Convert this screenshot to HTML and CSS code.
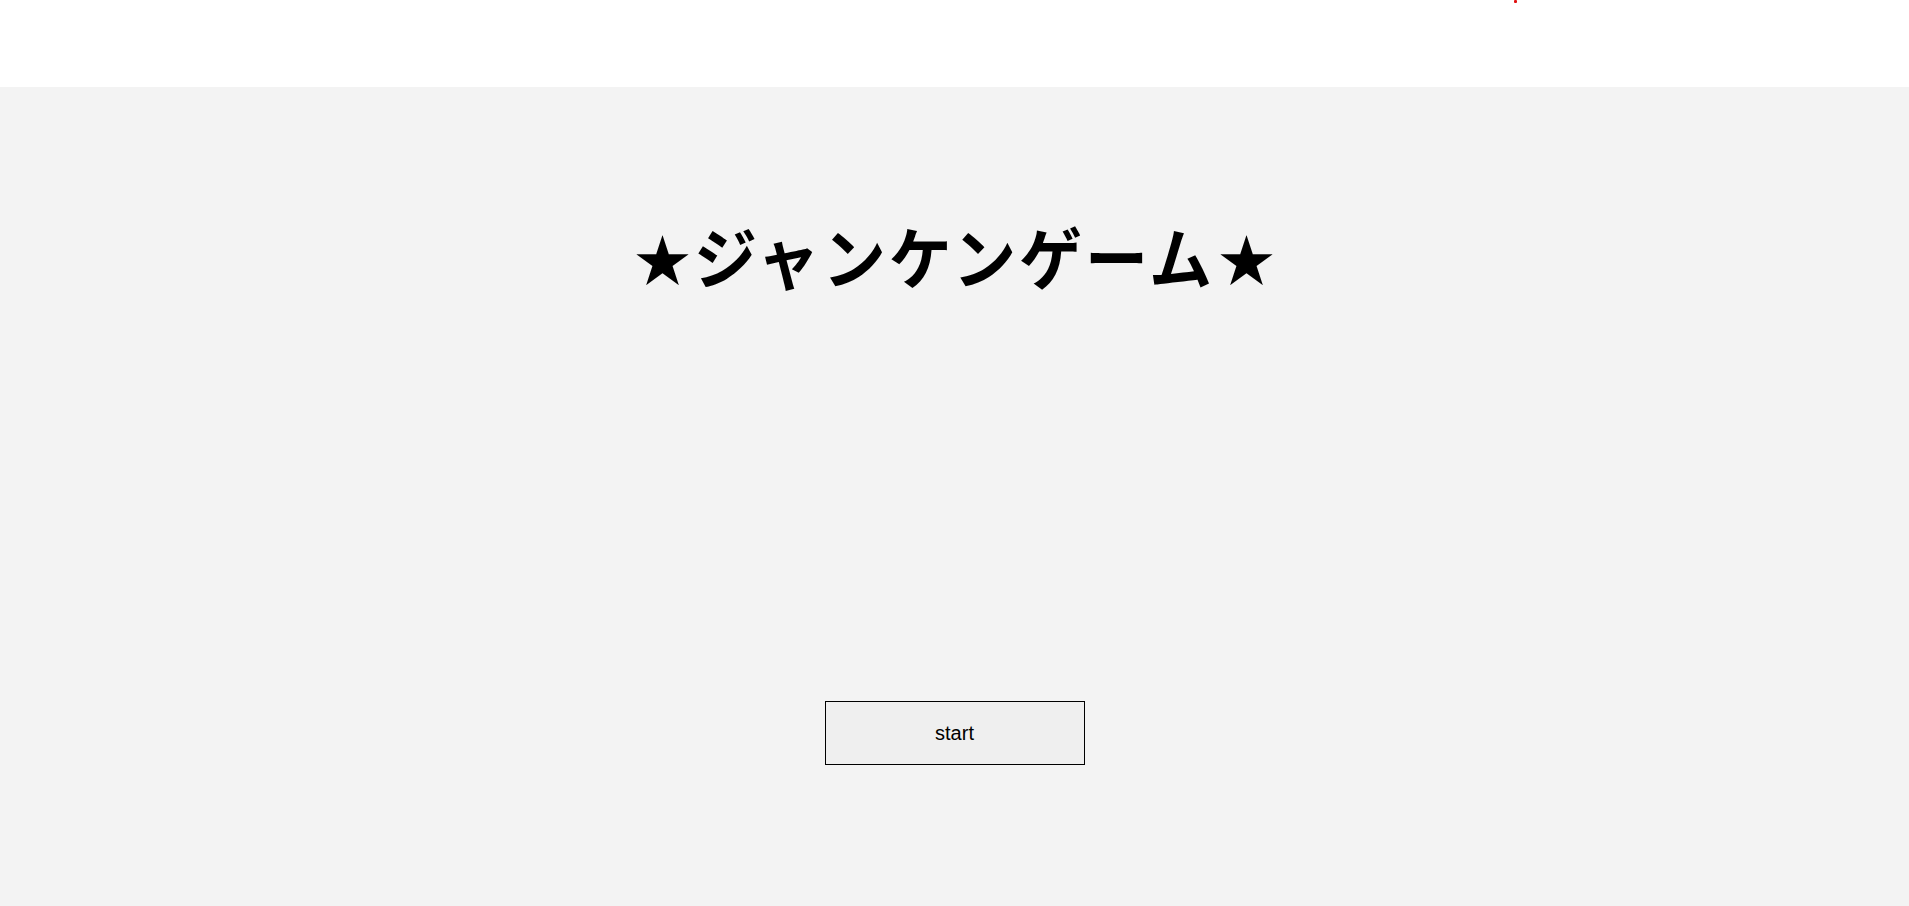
FILE: index.html
```html
<!DOCTYPE html>
<html lang="ja">
<head>
<meta charset="utf-8">
<title>ジャンケンゲーム</title>
<link rel="stylesheet" href="styles.css">
</head>
<body>
<header class="topbar"><span class="dot"></span></header>
<main class="stage">
  <h1 class="title"><span class="star">★</span><span class="kana">ジャンケンゲーム</span><span class="star">★</span></h1>
  <button class="start">start</button>
</main>
</body>
</html>
```
FILE: styles.css
```css
html, body {
  margin: 0;
  padding: 0;
  height: 100%;
}
body {
  font-family: "Noto Sans CJK JP", "Liberation Sans", sans-serif;
  background: #f3f3f3;
  display: flex;
  flex-direction: column;
}
.topbar {
  position: relative;
  height: 87px;
  background: #ffffff;
  flex: none;
}
.dot {
  position: absolute;
  left: 1514px;
  top: 0;
  width: 3px;
  height: 3px;
  background: #e01010;
  border-radius: 1px;
}
.stage {
  flex: 1;
  display: flex;
  flex-direction: column;
  align-items: center;
  background: #f3f3f3;
}
.title {
  margin: 0;
  margin-top: 130px;
  display: flex;
  align-items: center;
  height: 80px;
  font-weight: bold;
  color: #000;
}
.star {
  font-size: 56px;
  line-height: 80px;
  width: 63px;
  text-align: center;
}
.kana {
  display: inline-block;
  font-size: 63px;
  line-height: 80px;
  letter-spacing: 3px;
  margin-top: -4px;
  transform: scaleY(1.06);
}
.start {
  margin-top: 404px;
  width: 260px;
  height: 64px;
  border: 1px solid #000;
  background: #efefef;
  font-family: "Liberation Sans", Arial, sans-serif;
  font-size: 20px;
  color: #000;
  padding: 0;
}
```
